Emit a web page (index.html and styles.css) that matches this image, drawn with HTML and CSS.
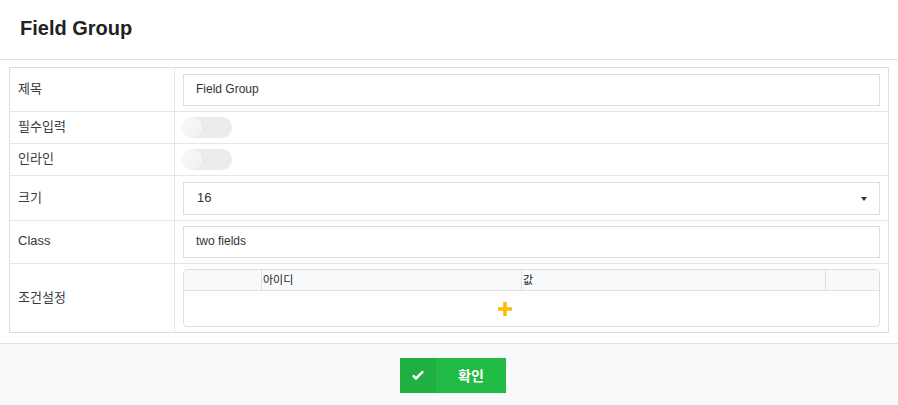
FILE: index.html
```html
<!DOCTYPE html>
<html lang="ko">
<head>
<meta charset="utf-8">
<link rel="stylesheet" href="styles.css">
</head>
<body>
<div class="modal">
  <div class="header">Field Group</div>
  <div class="content">
    <table class="form">
      <tr class="r1">
        <td class="label">제목</td>
        <td class="field"><div class="input">Field Group</div></td>
      </tr>
      <tr class="r2">
        <td class="label">필수입력</td>
        <td class="field"><div class="toggle"><span class="knob"></span></div></td>
      </tr>
      <tr class="r3">
        <td class="label">인라인</td>
        <td class="field"><div class="toggle"><span class="knob"></span></div></td>
      </tr>
      <tr class="r4">
        <td class="label">크기</td>
        <td class="field"><div class="input select"><span class="val">16</span><span class="caret"></span></div></td>
      </tr>
      <tr class="r5">
        <td class="label">Class</td>
        <td class="field"><div class="input">two fields</div></td>
      </tr>
      <tr class="r6">
        <td class="label">조건설정</td>
        <td class="field">
          <div class="cond">
            <div class="cond-head">
              <div class="c c1"></div>
              <div class="c c2">아이디</div>
              <div class="c c3">값</div>
              <div class="c c4"></div>
            </div>
            <div class="cond-body">
              <div class="add">
                <svg width="14" height="14" viewBox="0 0 14 14"><path d="M5.2 0h3.6v5.2H14v3.6H8.8V14H5.2V8.8H0V5.2h5.2z" fill="#fbbd08"/></svg>
              </div>
              <div class="spacer"></div>
            </div>
          </div>
        </td>
      </tr>
    </table>
  </div>
  <div class="actions">
    <button class="btn">
      <span class="icon"><svg width="14" height="12" viewBox="0 0 13 11"><path d="M1 5.8l3.6 3.6L12 2 10.4.4 4.6 6.2 2.6 4.2z" fill="#fff"/></svg></span>
      <span class="text">확인</span>
    </button>
  </div>
</div>
</body>
</html>
```
FILE: styles.css
```css
* { box-sizing: border-box; }
html, body { margin: 0; padding: 0; background: #fff; }
body {
  font-family: "Liberation Sans", Arial, "Noto Sans CJK KR", sans-serif;
  color: #333;
  width: 898px;
  height: 405px;
  overflow: hidden;
}
.modal { display: flex; flex-direction: column; height: 405px; }
.header {
  height: 60px;
  padding: 17px 20px 0;
  font-size: 20px;
  font-weight: bold;
  color: #222;
  border-bottom: 1px solid #e2e2e2;
}
.content { padding: 7px 9px 10px 9px; }
.form {
  width: 880px;
  border-collapse: collapse;
  border: 1px solid #ddd;
}
.form td { border-top: 1px solid #e6e6e6; padding: 0; vertical-align: middle; }
.form tr:first-child td { border-top: none; }
.form td.label {
  width: 165px;
  border-right: 1px solid #e6e6e6;
  padding: 0 0 4px 8px;
  font-family: "Noto Sans CJK KR", "Liberation Sans", sans-serif;
  font-size: 13px;
  color: #3a3a3a;
}
.form .r5 td.label { font-family: "Liberation Sans", Arial, sans-serif; }
.form td.field { padding: 0 8px; }
.r1 td { height: 44px; }
.r2 td, .r3 td { height: 32px; }
.r4 td { height: 45px; }
.r5 td { height: 43px; }
.r6 td { height: 69px; }
.input {
  height: 32px;
  border: 1px solid #ddd;
  padding: 0 12px 2px;
  display: flex;
  align-items: center;
  font-size: 12px;
  color: #333;
  background: #fff;
}
.select { justify-content: space-between; padding-left: 13px; padding-right: 12px; font-size: 13px; height: 33px; }
.caret {
  width: 0; height: 0;
  border-left: 3.5px solid transparent;
  border-right: 3.5px solid transparent;
  border-top: 4px solid #333;
  margin-top: 4px;
}
.toggle {
  width: 50px;
  height: 21px;
  border-radius: 11px;
  background: #ececec;
  position: relative;
  margin-left: -1px;
}
.toggle .knob {
  position: absolute;
  left: 0; top: 0;
  width: 21px; height: 21px;
  border-radius: 50%;
  background: linear-gradient(135deg, #fafafa, #efefef);
  box-shadow: 1px 0 1px rgba(0,0,0,0.04);
}
.cond {
  border: 1px solid #ddd;
  border-radius: 4px;
  height: 58px;
  display: flex;
  flex-direction: column;
  overflow: hidden;
}
.cond-head {
  display: flex;
  height: 21px;
  background: #f8f9fa;
  border-bottom: 1px solid #e0e0e0;
  font-family: "Noto Sans CJK KR", sans-serif;
  font-size: 11px;
  color: #222;
}
.cond-head .c { border-left: 1px solid #e0e0e0; padding-left: 1px; line-height: 18px; }
.cond-head .c1 { width: 77px; border-left: none; }
.cond-head .c2 { width: 260px; }
.cond-head .c3 { width: 304px; }
.cond-head .c4 { flex: 1; }
.cond-body { flex: 1; display: flex; }
.cond-body .add { width: 641px; display: flex; align-items: center; justify-content: center; }
.cond-body .spacer { flex: 1; }
.actions {
  flex: 1;
  border-top: 1px solid #e2e2e2;
  background: #f8f9fb;
  display: flex;
  justify-content: center;
  padding-top: 14px;
}
.btn {
  width: 106px;
  height: 35px;
  border: none;
  padding: 0;
  background: #21ba45;
  display: flex;
  color: #fff;
  font-family: "Noto Sans CJK KR", sans-serif;
  font-weight: bold;
  font-size: 14px;
  cursor: pointer;
  margin-left: 8px;
}
.btn .icon {
  width: 36px;
  height: 35px;
  background: rgba(0,0,0,0.05);
  display: flex;
  align-items: center;
  justify-content: center;
}
.btn .text { flex: 1; display: flex; align-items: center; justify-content: center; padding-bottom: 1px; }
```
